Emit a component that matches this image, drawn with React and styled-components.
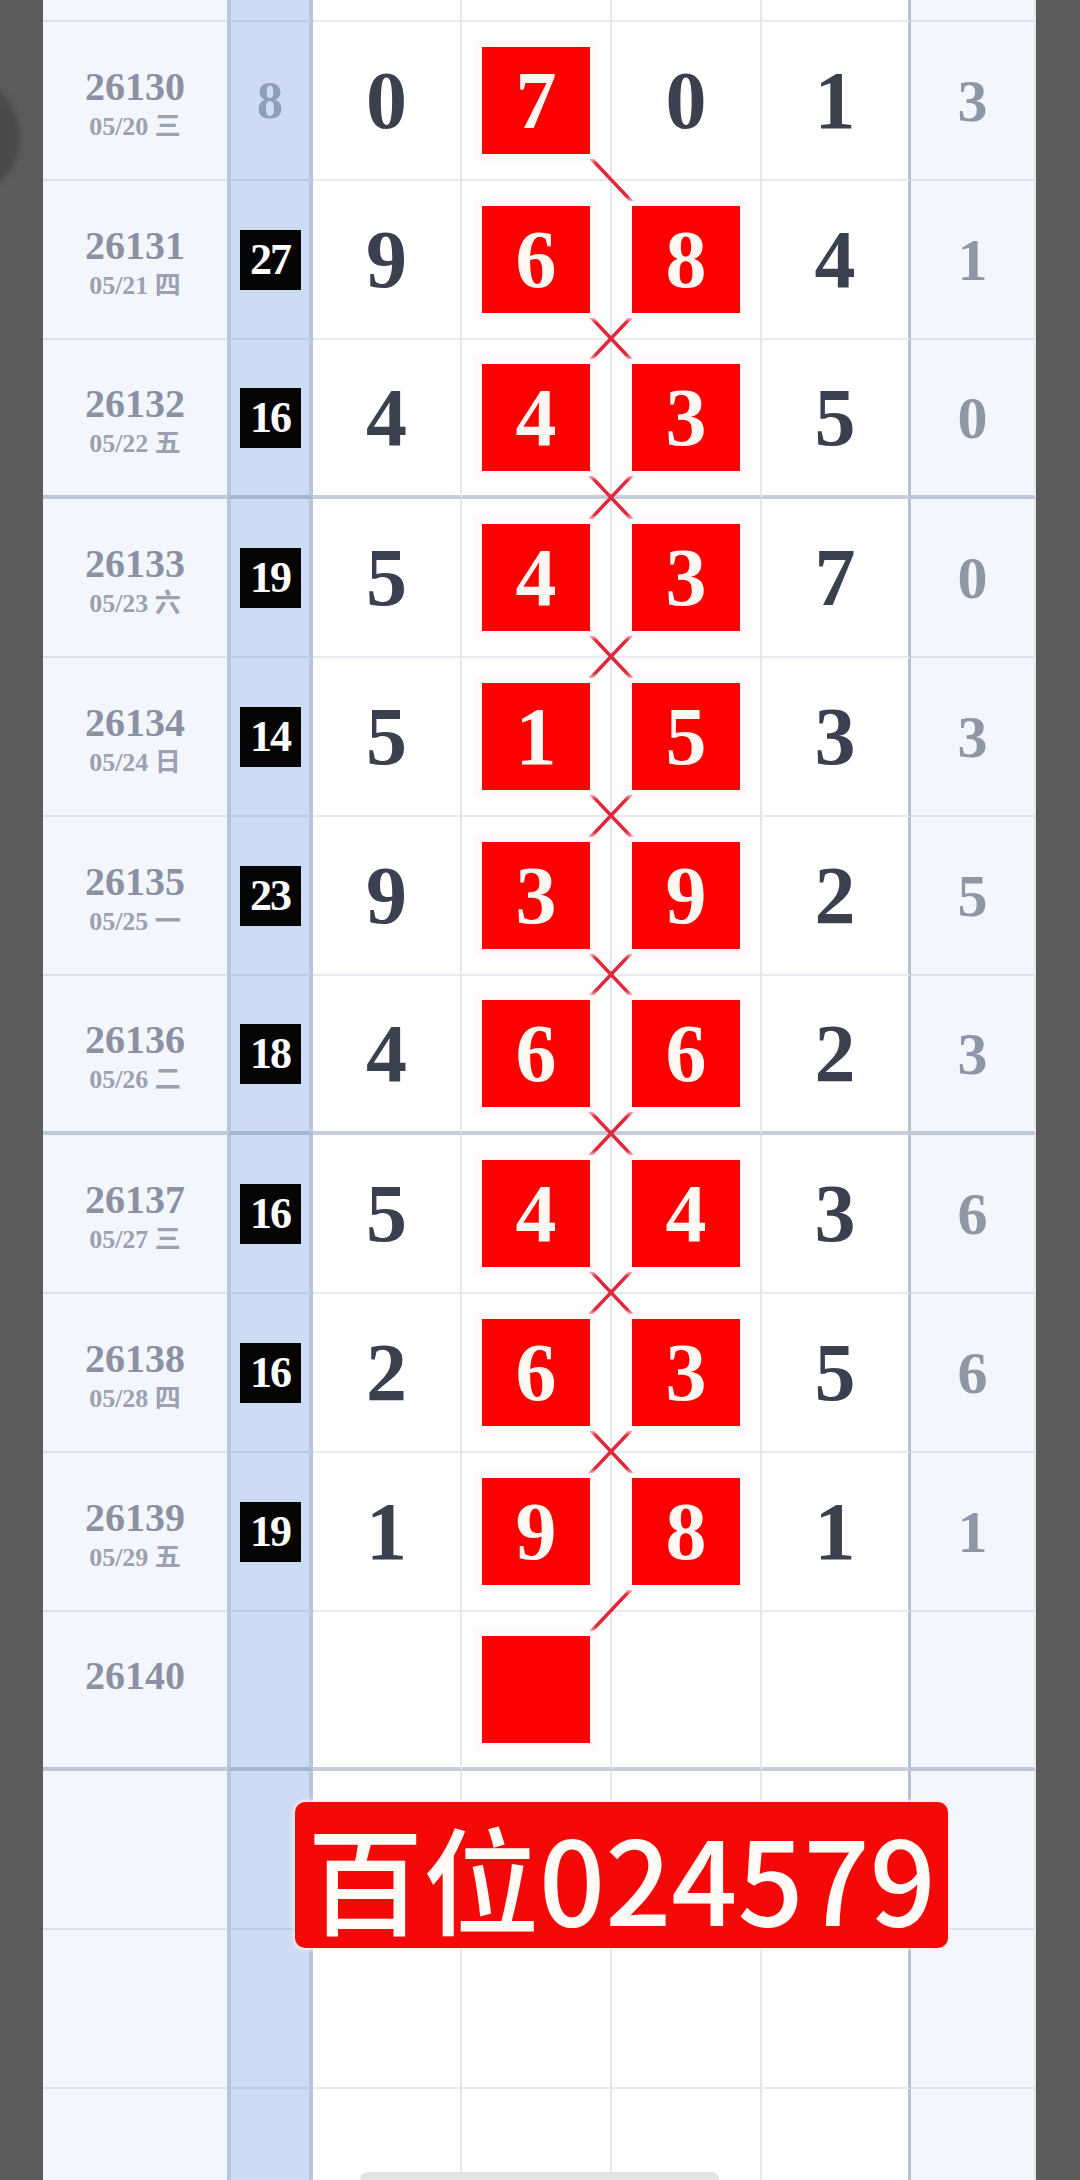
import React from 'react';
import styled, { createGlobalStyle } from 'styled-components';

const COLS = '184px 86px 149px 150px 150px 149px 125px';
const ROW_H = 159;
const TOP_H = 22;
const COL4_X = 493;
const COL5_X = 643;

const GlobalStyle = createGlobalStyle`
  html, body {
    margin: 0;
    padding: 0;
    background: #5b5c5b;
  }
`;

const Page = styled.div`
  position: relative;
  width: 1080px;
  height: 2180px;
  overflow: hidden;
  box-sizing: border-box;
  padding: 0 44px 0 43px;
  background: #5b5c5b;
`;

const FloatBall = styled.div`
  position: absolute;
  left: -100px;
  top: 77px;
  width: 120px;
  height: 120px;
  border-radius: 50%;
  background: #484948;
  filter: blur(3px);
`;

const HomeBar = styled.div`
  position: absolute;
  left: 360px;
  top: 2172px;
  width: 359px;
  height: 16px;
  border-radius: 8px;
  background: #e3e3e3;
`;

const Table = styled.div`
  position: relative;
  width: 993px;
  height: 100%;
  background: #fff;
  font-family: "Liberation Serif", "Noto Sans CJK SC", serif;
`;

const Row = styled.div`
  display: grid;
  grid-template-columns: ${COLS};
  height: ${(p) => p.$h || ROW_H}px;
  & > * {
    border-bottom: ${(p) =>
      p.$thick ? '4px solid rgba(72, 92, 130, 0.3)' : '2px solid rgba(72, 92, 130, 0.13)'};
  }
`;

const Cell = styled.div`
  box-sizing: border-box;
  display: flex;
  align-items: center;
  justify-content: center;
  min-width: 0;
`;

const IssueCell = styled(Cell)`
  flex-direction: column;
  padding-top: 6px;
  background: #f3f6fd;
`;

const SumCell = styled(Cell)`
  background: #cedcf3;
  border-left: 4px solid #b6c5e0;
  border-right: 4px solid #b6c5e0;
`;

const DigitCell = styled(Cell)`
  border-right: ${(p) => (p.$edge ? '3px solid #b7c1d1' : '2px solid #e4e7ee')};
`;

const MissCell = styled(Cell)`
  background: #f3f6fd;
  border-right: 2px solid #e2e7f0;
`;

const IssueNo = styled.div`
  font-size: 40px;
  font-weight: 700;
  line-height: 1;
  color: #8b91a2;
`;

const IssueDate = styled.div`
  margin-top: 7px;
  font-size: 26px;
  font-weight: 700;
  line-height: 1;
  color: #9ba1b1;
  white-space: pre;
`;

const SumPlain = styled.span`
  font-size: 52px;
  font-weight: 700;
  line-height: 1;
  color: #8e9fba;
`;

const SumBadge = styled.span`
  display: flex;
  align-items: center;
  justify-content: center;
  width: 61px;
  height: 60px;
  background: #050505;
  color: #fff;
  font-size: 44px;
  font-weight: 700;
  line-height: 1;
  letter-spacing: -2px;
`;

const Digit = styled.span`
  font-size: 82px;
  font-weight: 700;
  line-height: 1;
  color: #3b404e;
`;

const RedBox = styled.span`
  position: relative;
  z-index: 1;
  display: flex;
  align-items: center;
  justify-content: center;
  width: 108px;
  height: 107px;
  background: #fe0000;
  color: #fff8f2;
  font-size: 82px;
  font-weight: 700;
  line-height: 1;
  box-shadow: 0 0 0 5px #fffafa, 0 0 4px 7px rgba(255, 244, 240, 0.8);
`;

const MissDigit = styled.span`
  font-size: 60px;
  font-weight: 700;
  line-height: 1;
  color: #8f96a6;
`;

const Lines = styled.svg`
  position: absolute;
  left: 0;
  top: 0;
  pointer-events: none;
`;

const Label = styled.div`
  position: absolute;
  left: 252px;
  top: 1802px;
  z-index: 2;
  width: 653px;
  height: 146px;
  display: flex;
  align-items: center;
  justify-content: center;
  border-radius: 10px;
  background: #f40808;
  color: #fffaf6;
  font-family: "Noto Sans CJK SC", "Noto Sans", sans-serif;
  font-size: 116px;
  font-weight: 500;
  line-height: 1;
  box-shadow: 0 0 3px 2px rgba(255, 235, 230, 0.9);
`;

const rows = [
  { issue: '26130', date: '05/20 三', sum: '8', boxed: false, nums: ['0', '7', '0', '1', '3'], red: [true, false] },
  { issue: '26131', date: '05/21 四', sum: '27', boxed: true, nums: ['9', '6', '8', '4', '1'], red: [true, true] },
  { issue: '26132', date: '05/22 五', sum: '16', boxed: true, nums: ['4', '4', '3', '5', '0'], red: [true, true], thick: true },
  { issue: '26133', date: '05/23 六', sum: '19', boxed: true, nums: ['5', '4', '3', '7', '0'], red: [true, true] },
  { issue: '26134', date: '05/24 日', sum: '14', boxed: true, nums: ['5', '1', '5', '3', '3'], red: [true, true] },
  { issue: '26135', date: '05/25 一', sum: '23', boxed: true, nums: ['9', '3', '9', '2', '5'], red: [true, true] },
  { issue: '26136', date: '05/26 二', sum: '18', boxed: true, nums: ['4', '6', '6', '2', '3'], red: [true, true], thick: true },
  { issue: '26137', date: '05/27 三', sum: '16', boxed: true, nums: ['5', '4', '4', '3', '6'], red: [true, true] },
  { issue: '26138', date: '05/28 四', sum: '16', boxed: true, nums: ['2', '6', '3', '5', '6'], red: [true, true] },
  { issue: '26139', date: '05/29 五', sum: '19', boxed: true, nums: ['1', '9', '8', '1', '1'], red: [true, true] },
  { issue: '26140', date: ' ', sum: '', boxed: false, nums: ['', '', '', '', ''], red: [true, false], thick: true },
  { issue: '', date: '', sum: '', boxed: false, nums: ['', '', '', '', ''], red: [false, false] },
  { issue: '', date: '', sum: '', boxed: false, nums: ['', '', '', '', ''], red: [false, false] },
  { issue: '', date: '', sum: '', boxed: false, nums: ['', '', '', '', ''], red: [false, false] },
];

const centerY = (i) => TOP_H + i * ROW_H + 78;

// a box in one row links to the box in the other trend column of the next row
function trendSegments() {
  const segs = [];
  const xs = [COL4_X, COL5_X];
  for (let i = 0; i < rows.length - 1; i++) {
    [0, 1].forEach((c) => {
      const other = 1 - c;
      if (rows[i].red[c] && rows[i + 1].red[other]) {
        segs.push({ x1: xs[c], y1: centerY(i), x2: xs[other], y2: centerY(i + 1) });
      }
    });
  }
  return segs;
}

function Sum({ row }) {
  if (!row.sum) return null;
  return row.boxed ? <SumBadge>{row.sum}</SumBadge> : <SumPlain>{row.sum}</SumPlain>;
}

function TrendCell({ value, red }) {
  return red ? <RedBox>{value}</RedBox> : <Digit>{value}</Digit>;
}

export default function App() {
  const segs = trendSegments();
  return (
    <>
      <GlobalStyle />
      <Page>
        <FloatBall />
        <Table>
          <Lines width="993" height="2180">
            {segs.map((s, i) => (
              <line key={i} {...s} stroke="#e0283b" strokeWidth="3.5" />
            ))}
          </Lines>
          <Row $h={TOP_H}>
            <IssueCell />
            <SumCell />
            <DigitCell />
            <DigitCell />
            <DigitCell />
            <DigitCell $edge />
            <MissCell />
          </Row>
          {rows.map((row, i) => (
            <Row key={i} $thick={row.thick}>
              <IssueCell>
                {row.issue && <IssueNo>{row.issue}</IssueNo>}
                {row.date && <IssueDate>{row.date}</IssueDate>}
              </IssueCell>
              <SumCell>
                <Sum row={row} />
              </SumCell>
              <DigitCell>
                <Digit>{row.nums[0]}</Digit>
              </DigitCell>
              <DigitCell>
                <TrendCell value={row.nums[1]} red={row.red[0]} />
              </DigitCell>
              <DigitCell>
                <TrendCell value={row.nums[2]} red={row.red[1]} />
              </DigitCell>
              <DigitCell $edge>
                <Digit>{row.nums[3]}</Digit>
              </DigitCell>
              <MissCell>
                <MissDigit>{row.nums[4]}</MissDigit>
              </MissCell>
            </Row>
          ))}
          <Label>百位024579</Label>
        </Table>
        <HomeBar />
      </Page>
    </>
  );
}
